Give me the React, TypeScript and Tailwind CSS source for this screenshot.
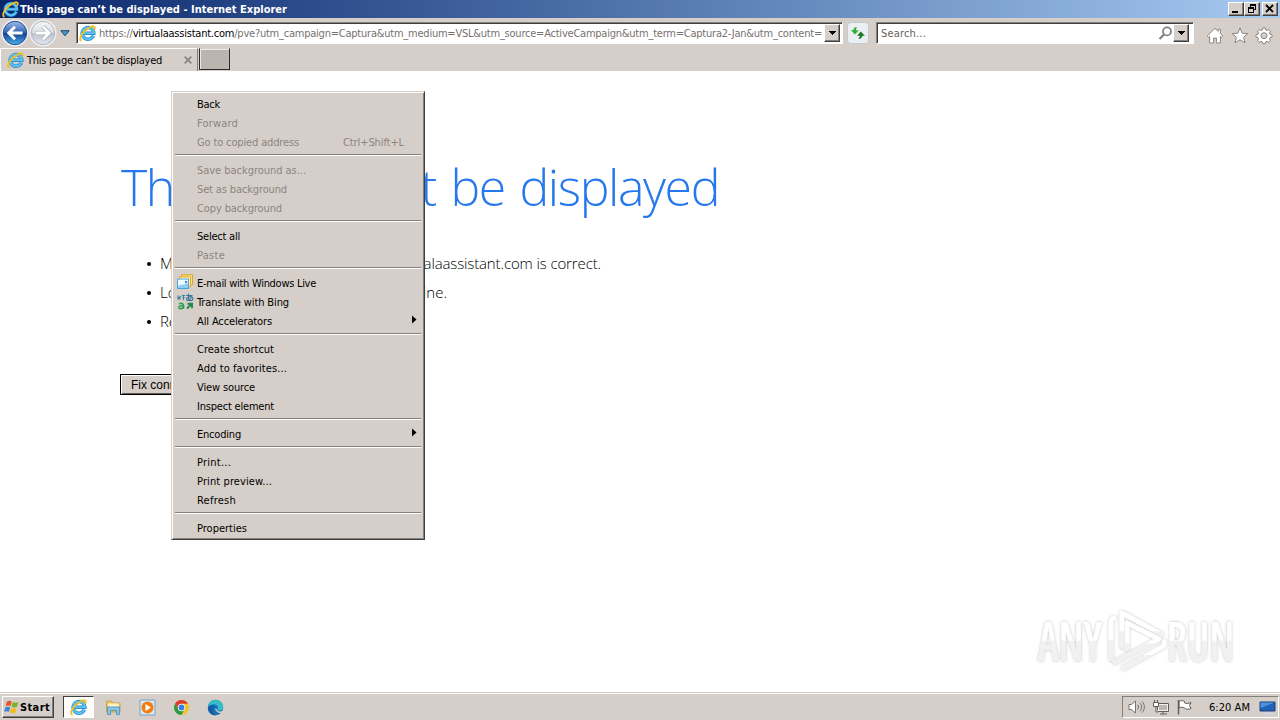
import { useLayoutEffect, useRef, useState, type ReactNode } from "react";

/* Spreads a single line of text over exactly `w` pixels. */
function Fit({ w, className = "", children }: { w: number; className?: string; children: ReactNode }) {
  const ref = useRef<HTMLSpanElement>(null);
  const [spacing, setSpacing] = useState(0);
  useLayoutEffect(() => {
    const el = ref.current;
    if (!el) return;
    const n = (el.textContent || "").length;
    setSpacing((w - el.getBoundingClientRect().width) / n);
  }, [w]);
  return (
    <span ref={ref} className={`inline-block whitespace-pre ${className}`} style={{ letterSpacing: `${spacing}px` }}>
      {children}
    </span>
  );
}

function IeIcon({ size }: { size: number }) {
  return (
    <svg width={size} height={size} viewBox="0 0 18 18" className="shrink-0">
      <path d="M15.2 11.3a6.2 6.2 0 1 1 .5-2.6H5" fill="none" stroke="#2182c9" strokeWidth="3.6" />
      <path d="M15.2 11.3a6.2 6.2 0 1 1 .5-2.6H5" fill="none" stroke="#5cc3f2" strokeWidth="2.2" />
      <path d="M2.6 16.8C-.6 15.3 2.4 9.5 7 5.6 11.5 1.7 16 .2 16.6 2.2c.3 1-.1 2-.6 3" fill="none" stroke="#f0c020" strokeWidth="1.9" />
    </svg>
  );
}

function Caret() {
  return (
    <svg width="7" height="4" viewBox="0 0 7 4" shapeRendering="crispEdges">
      <path d="M0 0h7L3.5 4z" fill="#000" />
    </svg>
  );
}

const raised =
  "border border-t-white border-l-white border-b-[#404040] border-r-[#404040] bg-[#d6cfc9] shadow-[inset_-1px_-1px_0_#857f7b]";

function WinButton({ kind }: { kind: "min" | "max" | "close" }) {
  return (
    <span className={`flex h-[14px] w-4 items-center justify-center ${raised}`}>
      <svg width="12" height="10" viewBox="0 0 12 10" shapeRendering="crispEdges">
        {kind === "min" && <path d="M2 7h6v2H2z" />}
        {kind === "max" && <path d="M4 0h6v6H8v3H2V3h2zM5 2v1h3v2h1V2zM3 5v3h4V5z" fillRule="evenodd" />}
        {kind === "close" && <path d="M2 1l7 7M9 1L2 8" stroke="#000" strokeWidth="1.8" shapeRendering="auto" />}
      </svg>
    </span>
  );
}

function NavArrow({ back }: { back?: boolean }) {
  return (
    <svg width="28" height="28" viewBox="0 0 28 28" className="shrink-0">
      <defs>
        <linearGradient id={back ? "nb" : "nf"} x1="0" y1="0" x2="0" y2="1">
          <stop offset="0" stopColor={back ? "#9dbce8" : "#f6f6f8"} />
          <stop offset=".48" stopColor={back ? "#3265b4" : "#dadde2"} />
          <stop offset=".52" stopColor={back ? "#123f91" : "#bcc3cc"} />
          <stop offset="1" stopColor={back ? "#4eb2f0" : "#e5e8ee"} />
        </linearGradient>
      </defs>
      <circle cx="14" cy="14" r="13.5" fill="#eef1f6" />
      <circle cx="14" cy="14" r="11.7" fill={back ? "url(#nb)" : "url(#nf)"} stroke={back ? "#2b4f86" : "#b0b4ba"} />
      {back ? (
        <path d="M21.5 14H8M14 7.8L7.8 14l6.2 6.2" fill="none" stroke="#fff" strokeWidth="3" />
      ) : (
        <g fill="none">
          <path d="M6 14h13.5M14 7.8l6.2 6.2-6.2 6.2" stroke="#a0a5ac" strokeWidth="4.2" />
          <path d="M6.5 14h13M14 7.8l6.2 6.2-6.2 6.2" stroke="#fff" strokeWidth="2.8" />
        </g>
      )}
    </svg>
  );
}

const field =
  "flex border border-t-[#857f7b] border-l-[#857f7b] border-b-white border-r-white bg-white shadow-[inset_1px_1px_0_#404040]";

function NavBar() {
  return (
    <div className="flex h-[30px] items-start pl-px">
      <div className="flex h-[30px] w-[56px] items-center">
        <NavArrow back />
        <NavArrow />
      </div>
      <svg width="10" height="7" viewBox="0 0 10 7" className="ml-[3px] mt-[12px]">
        <path d="M.8.7h8.4L5 5.8z" fill="#3d9ad8" stroke="#26445f" />
      </svg>
      <div className={`${field} ml-[6px] mt-1 h-[22px] w-[767px] items-center pl-[2px] pr-[2px]`}>
        <IeIcon size={17} />
        <Fit w={723} className="ml-[3px] mt-[2px] text-[11px] leading-4 text-[#77716e]">
          https://<span className="text-black">virtualaassistant.com</span>
          /pve?utm_campaign=Captura&utm_medium=VSL&utm_source=ActiveCampaign&utm_term=Captura2-Jan&utm_content=
        </Fit>
        <span className={`ml-auto flex h-[18px] w-4 shrink-0 items-center justify-center ${raised}`}>
          <Caret />
        </span>
      </div>
      <div className="ml-[4px] mt-1 flex h-[22px] w-[22px] items-center justify-center rounded-sm border border-[#c3cbd2] bg-[#eceff1]">
        <svg width="16" height="16" viewBox="0 0 16 16">
          <path d="M7.2 2C4.600 2 3.600 3.200 3.400 5.200H.9l4 4.200 3.900-4.200H6c0-1.200.2-2 1.200-3.200z" fill="#35ae35" />
          <path d="M8.300 14c2.700 0 3.900-1.200 4.100-3.200h2.500l-4-4.200L7 10.800h2.700c0 1.200-.4 2.100-1.400 3.200z" fill="#167d20" />
        </svg>
      </div>
      <div className={`${field} ml-[7px] mt-1 h-[22px] w-[318px] items-center pl-[4px]`}>
        <Fit w={45} className="mt-[2px] text-[11px] leading-4 text-[#66605d]">Search...</Fit>
        <svg width="15" height="15" viewBox="0 0 15 15" className="ml-auto mt-px">
          <circle cx="9" cy="5.400" r="4" fill="none" stroke="#85807e" strokeWidth="1.800" />
          <path d="M6.300 8.200L1.500 13" stroke="#85807e" strokeWidth="2.200" />
        </svg>
        <span className={`mr-[4px] flex h-[18px] w-4 items-center justify-center ${raised}`}>
          <Caret />
        </span>
      </div>
      <div className="ml-[12px] mt-[9px] flex gap-[6.5px]">
        <svg width="18" height="17" viewBox="0 0 18 17">
          <path d="M9 1.300L1.200 9l1.400 1.300 1-.9V16h4v-5h2.800v5h4V9.400l1 .9L16.800 9l-2.400-2.400V2.200h-2.200v2.200z" fill="#fff" stroke="#8c8683" />
        </svg>
        <svg width="18" height="17" viewBox="0 0 18 17">
          <path d="M9 1l2.200 5.200 5.700.4-4.300 3.600 1.400 5.600L9 12.700l-5 3.100 1.400-5.600L1.100 6.600l5.700-.4z" fill="#fff" stroke="#8c8683" />
        </svg>
        <svg width="18" height="17" viewBox="0 0 18 17">
          <path
            d="M7.8 1h2.400l.5 2 1.300.5 1.800-1 1.700 1.700-1 1.800.5 1.300 2 .5v2.300l-2 .5-.5 1.300 1 1.800-1.700 1.600-1.800-1-1.300.6-.5 1.600H7.800l-.5-1.600-1.300-.6-1.800 1-1.700-1.600 1-1.800-.5-1.300-2-.5V7.800l2-.5L3.500 6l-1-1.800 1.700-1.700 1.800 1L7.300 3z"
            fill="#fff"
            stroke="#8c8683"
          />
          <circle cx="9" cy="8.700" r="3" fill="#d6cfc9" stroke="#8c8683" />
        </svg>
      </div>
    </div>
  );
}

function MailIcon() {
  return (
    <svg width="16" height="17" viewBox="0 0 16 17">
      <path d="M4.500 .8h11v10h-11z" fill="#fbe08c" stroke="#dba524" />
      <path d="M2.500 2.800h11v10h-11z" fill="#fdf0b8" stroke="#e0ac2b" />
      <path d="M.5 5h11v9.500H.5z" fill="#eef8ff" stroke="#4ba3de" />
      <path d="M1 12c3-2 7-1 10-3v5H1z" fill="#8fcdf3" />
      <path d="M8 7h2v2H8z" fill="#3988c9" />
    </svg>
  );
}

function TranslateIcon() {
  return (
    <svg width="17" height="18" viewBox="0 0 17 18" fill="none">
      <path d="M1 2.500v3.500h3M4 3L1.500 5.500M5 2.500h3M5.500 4.500h2M6.500 2.500V7" stroke="#397f9f" strokeWidth="1.100" />
      <path d="M9 2.500h6.500M11.500 .5v5.500c0 2.500 4.500 2 4.500-.5 0-2.500-6.500-2.500-6.500.7 0 2.500 4 1.500 5-3" stroke="#39789b" strokeWidth="1.100" />
      <path d="M2 11c2-1.300 4.500-.6 4.500 1.200v3.500M6.500 12.800C3 12.500 1.500 13.300 1.800 14.700c.5 1.500 3.500 1.200 4.700-.5" stroke="#24a04c" strokeWidth="1.500" />
      <path d="M10 15.500l4-4M10.500 10.700H15v4.500" stroke="#24864a" strokeWidth="1.900" />
    </svg>
  );
}

type Item = { label: string; w: number; off?: boolean; shortcut?: string; arrow?: boolean; icon?: ReactNode };
const groups: Item[][] = [
  [
    { label: "Back", w: 23 },
    { label: "Forward", w: 41, off: true },
    { label: "Go to copied address", w: 102, off: true, shortcut: "Ctrl+Shift+L" },
  ],
  [
    { label: "Save background as...", w: 109, off: true },
    { label: "Set as background", w: 90, off: true },
    { label: "Copy background", w: 85, off: true },
  ],
  [
    { label: "Select all", w: 43 },
    { label: "Paste", w: 28, off: true },
  ],
  [
    { label: "E-mail with Windows Live", w: 119, icon: <MailIcon /> },
    { label: "Translate with Bing", w: 92, icon: <TranslateIcon /> },
    { label: "All Accelerators", w: 75, arrow: true },
  ],
  [
    { label: "Create shortcut", w: 77 },
    { label: "Add to favorites...", w: 90 },
    { label: "View source", w: 58 },
    { label: "Inspect element", w: 77 },
  ],
  [{ label: "Encoding", w: 44, arrow: true }],
  [
    { label: "Print...", w: 34 },
    { label: "Print preview...", w: 75 },
    { label: "Refresh", w: 39 },
  ],
  [{ label: "Properties", w: 50 }],
];

const uiFont = "font-['DejaVu_Sans_Condensed','DejaVu_Sans',sans-serif] [font-stretch:condensed]";

function ContextMenu() {
  return (
    <div
      className={`absolute left-[171px] top-[20px] w-[254px] border border-b-[#404040] border-l-[#d6cfc9] border-r-[#404040] border-t-[#d6cfc9] bg-[#d6cfc9] p-[2px] text-[11px] shadow-[inset_1px_1px_0_#fff,inset_-1px_-1px_0_#857f7b] ${uiFont}`}
    >
      {groups.map((g, i) => (
        <div key={i}>
          {i > 0 && (
            <div className="h-[9px] px-px pt-[3px]">
              <div className="h-[2px] border-t border-[#857f7b] bg-white" />
            </div>
          )}
          {g.map((it) => (
            <div key={it.label} className={`flex h-[19px] items-center ${it.off ? "text-[#8b8581]" : "text-black"}`}>
              <span className="flex w-[23px] shrink-0 pl-[3px]">{it.icon}</span>
              <Fit w={it.w} className="pt-[2px] leading-[17px]">{it.label}</Fit>
              {it.shortcut && <Fit w={61} className="ml-auto mr-[18px] pt-[2px] leading-[17px]">{it.shortcut}</Fit>}
              {it.arrow && (
                <svg width="5" height="9" viewBox="0 0 5 9" className="mb-[2px] ml-auto mr-[5px]">
                  <path d="M0 .5v8l4.500-4z" />
                </svg>
              )}
            </div>
          ))}
        </div>
      ))}
    </div>
  );
}

function Watermark() {
  return (
    <svg width="230" height="84" viewBox="0 0 230 84" className="absolute left-[1025px] top-[529px]">
      <defs>
        <linearGradient id="wm" x1="0" y1="0" x2="0" y2="1">
          <stop offset=".5" stopColor="#fff" />
          <stop offset=".52" stopColor="#f1f1f1" />
        </linearGradient>
        <filter id="sh" x="-20%" y="-20%" width="140%" height="140%">
          <feDropShadow dx="0" dy="0" stdDeviation="1.800" floodColor="#000" floodOpacity=".28" />
        </filter>
      </defs>
      <g filter="url(#sh)" fill="url(#wm)" className="font-['Open_Sans',sans-serif] text-[54px] font-semibold [font-stretch:condensed]">
        <text x="13" y="61" textLength="64" lengthAdjust="spacingAndGlyphs">ANY</text>
        <text x="142" y="61" textLength="67" lengthAdjust="spacingAndGlyphs">RUN</text>
        <g fill="none" stroke="url(#wm)" strokeWidth="4.500" strokeLinejoin="round">
          <path d="M97 49V13l41 22" />
          <path d="M91 18c-4 0-5 1-5 4v39" />
          <path d="M88 63l46-24-32-16v28" />
          <path d="M97 69l40-22c3-2 3-5 1-7" />
        </g>
      </g>
    </svg>
  );
}

function Taskbar() {
  return (
    <div className="flex h-7 items-start border-t border-[#d6cfc9] bg-[#d6cfc9] pl-0.5 shadow-[inset_0_1px_0_#fff]">
      <div className={`mt-[3px] flex h-[22px] w-[52px] items-center pl-px ${raised}`}>
        <svg width="16" height="16" viewBox="0 0 16 16" className="shrink-0">
          <path d="M3 2.500c2-1 3.500-.7 4.700.1L6.500 7.200C5 6.300 3.500 6.300 1.700 7z" fill="#e8542a" />
          <path d="M8.700 3c1.800 1 3.500 1 5.600.1L13 7.800c-2 .9-3.800.8-5.500-.2z" fill="#78b52d" />
          <path d="M1.400 8.200c1.900-.8 3.400-.7 4.800.1L5 12.800c-1.500-.9-3.200-.8-4.800 0z" fill="#3b86d8" />
          <path d="M7.200 8.800c1.800.9 3.500 1 5.500.2l-1.300 4.600c-2 .9-3.700.8-5.400-.2z" fill="#f6b91c" />
        </svg>
        <Fit w={30} className="pt-px text-[11px] font-bold leading-4">Start</Fit>
      </div>
      <div className="ml-[9px] mt-[3px] flex h-[22px] w-[31px] items-center justify-center border border-b-white border-l-[#404040] border-r-white border-t-[#404040] bg-[#fdfcfb]">
        <IeIcon size={17} />
      </div>
      <div className="ml-[11px] mt-[6px] flex items-center gap-[17px]">
        <svg width="17" height="17" viewBox="0 0 17 17">
          <path d="M1.500 2h5l1 2H15v9H1.500z" fill="#e8c568" stroke="#c9a34a" />
          <path d="M3 4.500h11v4H3z" fill="#fff3c4" />
          <path d="M2.500 8h12v7.500h-3v-4h-6v4h-3z" fill="#8ac4e4" stroke="#5a98bd" />
        </svg>
        <svg width="17" height="17" viewBox="0 0 17 17">
          <path d="M1 1h15v15H1z" fill="#d8e8f4" stroke="#76a3c6" />
          <circle cx="8.500" cy="8.500" r="6" fill="#f47c13" />
          <path d="M6.500 5v7l5.500-3.500z" fill="#fff" />
        </svg>
        <svg width="17" height="17" viewBox="0 0 17 17">
          <circle cx="8.500" cy="8.500" r="7.500" fill="#f5c322" />
          <path d="M2 4.750A7.500 7.500 0 0 1 15 4.750H8.500L5.250 10.400z" fill="#dc3f31" />
          <path d="M2 4.750a7.500 7.500 0 0 0 6.300 11.250l3.400-5.700H5.300z" fill="#2b9b4a" />
          <circle cx="8.500" cy="8.500" r="3.700" fill="#fff" />
          <circle cx="8.500" cy="8.500" r="2.900" fill="#377fe5" />
        </svg>
        <svg width="17" height="17" viewBox="0 0 17 17">
          <circle cx="8.500" cy="8.500" r="7.700" fill="#1674ba" />
          <path d="M.9 8C1.500-1.300 15-1.200 16.200 7.500c.3 3-2.200 4.200-4.700 4-1.500-.2-1.300-1-.9-1.600C12.500 5 5 3.500.9 8z" fill="#35bcc7" />
          <path d="M10 10.500c-.5 1.700 3 2.800 5.800 1.200l.7.200-1 1.500c-2 1-5.500 1.600-7.700-3.900z" fill="#d6cfc9" />
          <path d="M.9 9.500c.7-4 4.500-4 7-2-3 2-2.600 7.300 2 8.600C5.500 17 1 14 .9 9.500z" fill="#175da4" />
        </svg>
      </div>
      <div className="ml-auto mr-px mt-[3px] flex h-[22px] w-[157px] items-center border border-b-white border-l-[#857f7b] border-r-white border-t-[#857f7b] pl-[5px]">
        <svg width="18" height="16" viewBox="0 0 18 16">
          <path d="M1 5.500h2.500L7.500 2v12L3.500 10.500H1z" fill="#fff" stroke="#77716d" />
          <path d="M9.500 5.500c1.300 1.500 1.300 3.500 0 5M11.800 3.800c2.400 2.500 2.400 6 0 8.500M14 2.300c3.200 3.500 3.200 8 0 11.400" fill="none" stroke="#77716d" />
        </svg>
        <svg width="18" height="17" viewBox="0 0 18 17" className="ml-[6px]">
          <path d="M5.500 4.500h11v8h-11z" fill="#f4f2f0" stroke="#625d59" />
          <path d="M7 6h8v5H7z" fill="#bdb7b2" />
          <path d="M8 15h7M11 13v2" stroke="#625d59" />
          <path d="M1.500 3.500h5v4h-5zM2.500 1v2.500M5.500 1v2.500M4 7.500v5.500h2" fill="#fff" stroke="#625d59" />
        </svg>
        <svg width="17" height="17" viewBox="0 0 17 17" className="ml-[6px]">
          <path d="M3 2.500c2-1.500 4-1 5.500 0v1.300c1.800 1 3.700 1 6.500-.3l-1.500 3 1.500 3c-2.500 1.200-5 1-6.500-.5-2-1-3.800-1-5.500 0z" fill="#fff" stroke="#625d59" />
          <path d="M2.500 1v14.500" stroke="#625d59" strokeWidth="1.500" />
        </svg>
        <Fit w={41} className="ml-[16px] pt-[2px] text-[11px] leading-4">6:20 AM</Fit>
        <svg width="17" height="16" viewBox="0 0 17 16" className="ml-[9px]">
          <path d="M1 3h15v9H1z" fill="#1f62b8" stroke="#1a3e74" />
          <path d="M1.500 3.500h14L1.500 9z" fill="#4f92dc" />
          <path d="M4 14.500h9" stroke="#c6dcf2" />
        </svg>
      </div>
    </div>
  );
}

const hints = [
  { text: "Make sure the web address https://virtualaassistant.com is correct.", w: 441 },
  { text: "Look for the page with your search engine.", w: 287 },
  { text: "Refresh the page in a few minutes.", w: 230 },
];

export default function App() {
  return (
    <div className="flex h-[720px] w-[1280px] flex-col overflow-hidden bg-white text-black">
      <div className={`flex h-[18px] items-center bg-linear-to-r from-[#0b256b] to-[#a6caf0] px-[2px] ${uiFont}`}>
        <IeIcon size={17} />
        <Fit w={267} className="ml-px pt-px text-[11px] font-bold leading-[17px] text-white">
          This page can’t be displayed - Internet Explorer
        </Fit>
        <div className="ml-auto flex">
          <WinButton kind="min" />
          <WinButton kind="max" />
          <span className="w-[2px]" />
          <WinButton kind="close" />
        </div>
      </div>
      <div className={`h-[53px] bg-[#d6cfc9] ${uiFont}`}>
        <NavBar />
        <div className="flex h-[23px] items-start">
          <div className="flex h-[23px] w-[198px] items-center border-l border-r border-t border-l-white border-r-[#857f7b] border-t-white pl-[6px]">
            <IeIcon size={17} />
            <Fit w={135} className="ml-[3px] mt-px text-[11px] leading-4">This page can’t be displayed</Fit>
            <svg width="8" height="8" viewBox="0 0 8 8" className="ml-[22px]">
              <path d="M.7.7l6.600 6.600M7.300.7L.7 7.300" stroke="#8b8581" strokeWidth="1.700" />
            </svg>
          </div>
          <div className="ml-px h-[22px] w-[31px] border border-b-[#302b29] border-l-[#302b29] border-r-[#302b29] border-t-[#d6cfc9] bg-[#bcb4af] shadow-[inset_1px_1px_0_#eee8e4]" />
        </div>
      </div>
      <main className="relative flex h-[621px] flex-col items-start overflow-hidden pl-[120px] font-['Open_Sans',sans-serif]">
        <h1 className="mt-[80px] h-[72px] pl-px text-[50px] font-light leading-[72px] text-[#2778ec]">
          <Fit w={598} className="[word-spacing:3px]">This page can’t be displayed</Fit>
        </h1>
        <ul className="mt-[26px] text-[15px] font-light leading-[29px]">
          {hints.map(({ text, w }) => (
            <li key={text} className="flex h-[29px] items-center pl-[27px]">
              <span className="mr-[9px] size-[4px] rounded-full bg-black" />
              <Fit w={w}>{text}</Fit>
            </li>
          ))}
        </ul>
        <button className="mt-[38px] flex h-[21px] w-[168px] items-center border border-black bg-[#d6cfc9] pl-[10px] font-['Liberation_Sans',sans-serif] text-[12px] shadow-[inset_1px_1px_0_#fff,inset_-1px_-1px_0_#625d59]">
          Fix connection problems
        </button>
        <Watermark />
        <ContextMenu />
      </main>
      <div className={uiFont}>
        <Taskbar />
      </div>
    </div>
  );
}
